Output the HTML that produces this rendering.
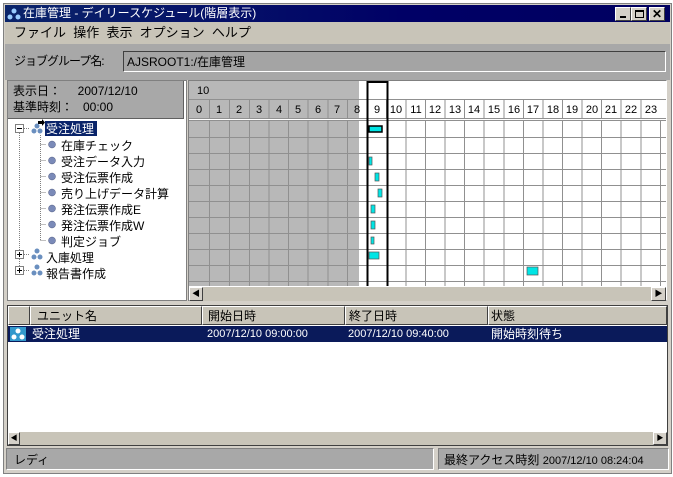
<!DOCTYPE html>
<html><head><meta charset="utf-8"><style>
*{margin:0;padding:0;box-sizing:border-box}
body{width:673px;height:477px;background:#fff;position:relative;overflow:hidden;font-family:"Liberation Sans","Noto Sans CJK JP",sans-serif;font-size:12px;color:#000}
.a{position:absolute}
.t{white-space:nowrap;line-height:14px}
.sunk{border-top:1px solid #808080;border-left:1px solid #808080;border-bottom:1px solid #fff;border-right:1px solid #fff}
.rais{border-top:1px solid #fff;border-left:1px solid #fff;border-bottom:1px solid #404040;border-right:1px solid #404040;background:#d4d0c8}
</style></head><body>
<div class="a" style="left:3px;top:3px;width:669px;height:471px;background:#d4d0c8;border:1px solid #808080"></div>
<div class="a" style="left:5px;top:5px;width:665px;height:17px;background:linear-gradient(90deg,#0a246a,#000066 60%,#000060)"></div>
<svg class="a" style="left:7px;top:7px" width="14" height="14"><circle cx="7" cy="4" r="2.5" fill="#9cf"/><circle cx="3" cy="10" r="2.5" fill="#9cf"/><circle cx="11" cy="10" r="2.5" fill="#9cf"/></svg>
<div class="a t" style="left:23px;top:6px;color:#fff;font-size:12px">在庫管理 - デイリースケジュール(階層表示)</div>
<div class="a rais" style="left:615px;top:7px;width:16px;height:14px"><div class="a" style="left:4px;top:8px;width:6px;height:2px;background:#000"></div></div>
<div class="a rais" style="left:631px;top:7px;width:16px;height:14px"><div class="a" style="left:3px;top:2px;width:9px;height:8px;border:1px solid #000;border-top-width:2px"></div></div>
<div class="a rais" style="left:649px;top:7px;width:16px;height:14px;font-weight:bold;font-size:12px;text-align:center;line-height:12px">✕</div>
<div class="a" style="left:5px;top:22px;width:665px;height:22px;background:#c8c4b8"></div>
<div class="a t" style="left:14px;top:26px;font-size:13px">ファイル&nbsp;&nbsp;操作&nbsp;&nbsp;表示&nbsp;&nbsp;オプション&nbsp;&nbsp;ヘルプ</div>
<div class="a" style="left:5px;top:44px;width:665px;height:36px;background:#a8a8a8"></div>
<div class="a t" style="left:14px;top:54px;font-size:12px;letter-spacing:-1px">ジョブグループ名:</div>
<div class="a sunk" style="left:123px;top:51px;width:543px;height:21px;border-color:#404040 #fff #fff #404040;background:#a4a4a4"></div>
<div class="a t" style="left:127px;top:55px;font-size:12px">AJSROOT1:/在庫管理</div>
<div class="a" style="left:7px;top:80px;width:180px;height:221px;background:#fff;border:1px solid #808080"></div>
<div class="a" style="left:8px;top:81px;width:176px;height:38px;background:#a8a8a8;border-bottom:1px solid #606060;border-right:1px solid #606060"></div>
<div class="a t" style="left:13px;top:84px">表示日：&nbsp;&nbsp;&nbsp;&nbsp;&nbsp;2007/12/10</div>
<div class="a t" style="left:13px;top:100px">基準時刻：&nbsp;&nbsp;&nbsp;00:00</div>
<svg class="a" style="left:7px;top:119px" width="180" height="170">
<g stroke="#808080" stroke-dasharray="1 1" fill="none">
<path d="M12.5 14V150M33.5 16V122M17 9.5H22M33.5 25.5H39M33.5 41.5H39M33.5 57.5H39M33.5 73.5H39M33.5 89.5H39M33.5 105.5H39M33.5 121.5H39M17 135.5H22M17 151.5H22"/></g>
<g fill="#fff" stroke="#808080"><rect x="8.5" y="5.5" width="8" height="8"/><rect x="8.5" y="131.5" width="8" height="8"/><rect x="8.5" y="147.5" width="8" height="8"/></g>
<path d="M10 9.5H15M10 135.5H15M12.5 133V138M10 151.5H15M12.5 149V154" stroke="#000"/>
<g fill="#6a8fbf"><circle cx="30" cy="7" r="2.5"/><circle cx="27" cy="12" r="2.5"/><circle cx="33" cy="12" r="2.5"/>
<circle cx="30" cy="132" r="2.5"/><circle cx="27" cy="138" r="2.5"/><circle cx="33" cy="138" r="2.5"/>
<circle cx="30" cy="148" r="2.5"/><circle cx="27" cy="154" r="2.5"/><circle cx="33" cy="154" r="2.5"/></g>
<path d="M31 2h4v-2l3 3.5-3 3.5v-2h-4z" fill="#000"/>
<g fill="#7a8ab8" stroke="#505a80" stroke-width=".5"><circle cx="45" cy="25.5" r="3.5"/><circle cx="45" cy="41.5" r="3.5"/><circle cx="45" cy="57.5" r="3.5"/><circle cx="45" cy="73.5" r="3.5"/><circle cx="45" cy="89.5" r="3.5"/><circle cx="45" cy="105.5" r="3.5"/><circle cx="45" cy="121.5" r="3.5"/></g>
</svg>
<div class="a" style="left:45px;top:121px;width:52px;height:15px;background:#0a246a"></div>
<div class="a t" style="left:46px;top:122px;color:#fff">受注処理</div>
<div class="a t" style="left:61px;top:138px;line-height:16px">在庫チェック<br>受注データ入力<br>受注伝票作成<br>売り上げデータ計算<br>発注伝票作成E<br>発注伝票作成W<br>判定ジョブ</div>
<div class="a t" style="left:46px;top:250px;line-height:16px">入庫処理<br>報告書作成</div>
<div class="a" style="left:188px;top:80px;width:479px;height:221px;background:#fff;border:1px solid #808080;border-right-color:#fff"></div>
<svg class="a" style="left:189px;top:81px" width="477" height="205" font-family="Liberation Sans" font-size="11">
<rect x="0" y="0" width="170" height="37" fill="#b8b8b8"/>
<rect x="0" y="40" width="170" height="165" fill="#b8b8b8"/>
<text x="8" y="13">10</text>
<g stroke="#909090" fill="none">
<path d="M0 18.5H477M0 37.5H477M0 39.5H477"/>
<path d="M20.5 18v19M40.5 18v19M60.5 18v19M80 18v19M99.5 18v19M119 18v19M139 18v19M158.5 18v19M197.5 18v19M217 18v19M236.5 18v19M256 18v19M275.5 18v19M295 18v19M315 18v19M334.5 18v19M354 18v19M373.5 18v19M393 18v19M412.5 18v19M432 18v19M452 18v19"/>
<path d="M20.5 40v165M40.5 40v165M60.5 40v165M80 40v165M99.5 40v165M119 40v165M139 40v165M158.5 40v165M217 40v165M236.5 40v165M256 40v165M275.5 40v165M295 40v165M315 40v165M334.5 40v165M354 40v165M373.5 40v165M393 40v165M412.5 40v165M432 40v165M452 40v165M471.5 40v165"/>
<path d="M0 56.5H477M0 72.5H477M0 88.5H477M0 104.5H477M0 120.5H477M0 136.5H477M0 152.5H477M0 168.5H477M0 184.5H477M0 200.5H477"/>
</g>
<path d="M178.5 0V205M198.5 0V205" stroke="#000" stroke-width="2"/>
<path d="M178 1H198" stroke="#000" stroke-width="2"/>
<g text-anchor="middle"><text x="10" y="32">0</text><text x="30" y="32">1</text><text x="50" y="32">2</text><text x="70" y="32">3</text><text x="90" y="32">4</text><text x="109" y="32">5</text><text x="129" y="32">6</text><text x="148" y="32">7</text><text x="168" y="32">8</text><text x="188" y="32">9</text><text x="207" y="32">10</text><text x="227" y="32">11</text><text x="246" y="32">12</text><text x="266" y="32">13</text><text x="285" y="32">14</text><text x="305" y="32">15</text><text x="325" y="32">16</text><text x="344" y="32">17</text><text x="364" y="32">18</text><text x="383" y="32">19</text><text x="403" y="32">20</text><text x="422" y="32">21</text><text x="442" y="32">22</text><text x="462" y="32">23</text></g>
<g fill="#00e5e5" stroke="#555" stroke-width=".7">
<rect x="180" y="45" width="13" height="6" stroke="#000" stroke-width="1.5"/>
<rect x="180" y="76" width="3" height="8"/><rect x="186" y="92" width="4" height="8"/><rect x="189" y="108" width="4" height="8"/>
<rect x="182" y="124" width="4" height="8"/><rect x="182" y="140" width="4" height="8"/><rect x="182" y="156" width="3" height="7"/>
<rect x="180" y="171" width="10" height="7"/><rect x="338" y="186" width="11" height="8"/></g>
</svg>
<div class="a" style="left:189px;top:286px;width:477px;height:15px;background:#c8c4b8;border-top:1px solid #fff"></div>
<div class="a rais" style="left:189px;top:287px;width:14px;height:14px;font-size:8px;text-align:center;line-height:12px">◀</div>
<div class="a rais" style="left:651px;top:287px;width:15px;height:14px;font-size:8px;text-align:center;line-height:12px">▶</div>
<div class="a" style="left:7px;top:305px;width:661px;height:141px;background:#fff;border:1px solid #404040"></div>
<div class="a" style="left:8px;top:306px;width:659px;height:19px;background:#c8c4b8"></div>
<div class="a rais" style="left:8px;top:306px;width:22px;height:19px;background:#c8c4b8"></div>
<div class="a rais" style="left:30px;top:306px;width:172px;height:19px;background:#c8c4b8"></div>
<div class="a rais" style="left:202px;top:306px;width:143px;height:19px;background:#c8c4b8"></div>
<div class="a rais" style="left:345px;top:306px;width:143px;height:19px;background:#c8c4b8"></div>
<div class="a rais" style="left:488px;top:306px;width:179px;height:19px;background:#c8c4b8"></div>
<div class="a t" style="left:37px;top:309px">ユニット名</div>
<div class="a t" style="left:208px;top:309px">開始日時</div>
<div class="a t" style="left:349px;top:309px">終了日時</div>
<div class="a t" style="left:491px;top:309px">状態</div>
<div class="a" style="left:8px;top:326px;width:659px;height:16px;background:#0a1a5a"></div>
<svg class="a" style="left:10px;top:327px" width="16" height="14"><rect width="16" height="14" fill="#3399cc"/><circle cx="8" cy="4" r="2.5" fill="#fff"/><circle cx="4" cy="10" r="2.5" fill="#fff"/><circle cx="12" cy="10" r="2.5" fill="#fff"/></svg>
<div class="a t" style="left:32px;top:327px;color:#fff">受注処理</div>
<div class="a t" style="left:207px;top:327px;color:#fff;font-size:11px">2007/12/10 09:00:00</div>
<div class="a t" style="left:348px;top:327px;color:#fff;font-size:11px">2007/12/10 09:40:00</div>
<div class="a t" style="left:491px;top:327px;color:#fff">開始時刻待ち</div>
<div class="a" style="left:8px;top:432px;width:659px;height:13px;background:#c8c4b8"></div>
<div class="a rais" style="left:8px;top:432px;width:12px;height:13px;font-size:7px;text-align:center;line-height:11px">◀</div>
<div class="a rais" style="left:653px;top:432px;width:14px;height:13px;font-size:7px;text-align:center;line-height:11px">▶</div>
<div class="a sunk" style="left:6px;top:448px;width:428px;height:22px;background:#a8a8a8"></div>
<div class="a t" style="left:14px;top:453px">レディ</div>
<div class="a sunk" style="left:438px;top:448px;width:231px;height:22px;background:#a8a8a8"></div>
<div class="a t" style="left:444px;top:453px">最終アクセス時刻 <span style="font-size:11px">2007/12/10 08:24:04</span></div>
</body></html>
